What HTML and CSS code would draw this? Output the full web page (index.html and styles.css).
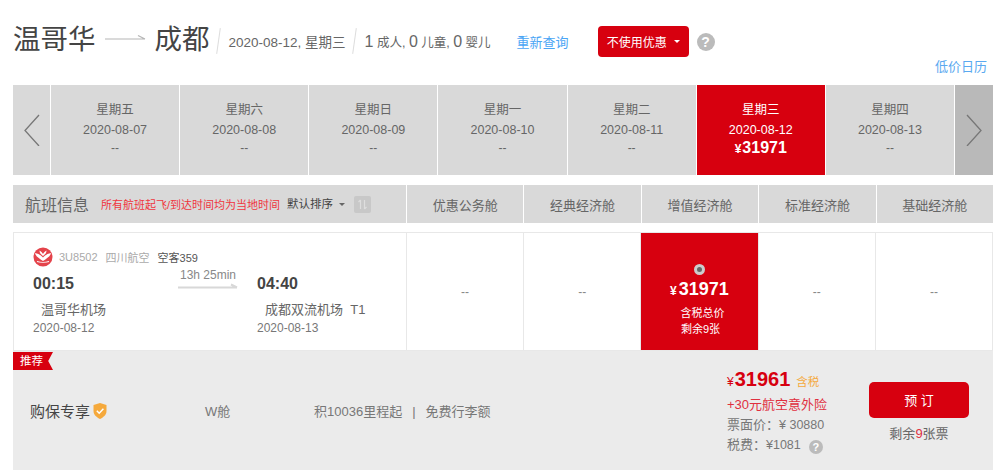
FILE: index.html
```html
<!DOCTYPE html>
<html>
<head>
    <title>航班查询</title>
    <link rel="stylesheet" href="styles.css">
</head>
<body>
    <div id="page">
        <div class="search-bar">
            <span class="city">温哥华</span>
            <svg class="route-arrow" width="41" height="8" viewBox="0 0 41 8">
                <path d="M0 5H40M33 1.5L40 5" fill="none" stroke="#b5b5b5" stroke-width="1.2"/>
            </svg>
            <span class="city">成都</span>
            <span class="slash"></span>
            <span class="search-date">2020-08-12, 星期三</span>
            <span class="slash"></span>
            <span class="people"><b>1</b> 成人, <b>0</b> 儿童, <b>0</b> 婴儿</span>
            <a class="requery">重新查询</a>
            <button class="discount-btn">不使用优惠<i class="caret"></i></button>
            <span class="help help-big">?</span>
        </div>
        <div class="calendar-link"><a>低价日历</a></div>

        <div class="date-strip">
            <div class="strip-arrow">
                <svg width="16" height="32" viewBox="0 0 16 32"><path d="M15 1L1 16.5L15 32" fill="none" stroke="#777" stroke-width="1.3"/></svg>
            </div>
            <div class="day"><span>星期五</span><span>2020-08-07</span><span class="day-price">--</span></div>
            <div class="day"><span>星期六</span><span>2020-08-08</span><span class="day-price">--</span></div>
            <div class="day"><span>星期日</span><span>2020-08-09</span><span class="day-price">--</span></div>
            <div class="day"><span>星期一</span><span>2020-08-10</span><span class="day-price">--</span></div>
            <div class="day"><span>星期二</span><span>2020-08-11</span><span class="day-price">--</span></div>
            <div class="day day-active"><span>星期三</span><span>2020-08-12</span><span class="day-price"><small>¥</small>31971</span></div>
            <div class="day"><span>星期四</span><span>2020-08-13</span><span class="day-price">--</span></div>
            <div class="strip-arrow strip-next">
                <svg width="16" height="32" viewBox="0 0 16 32"><path d="M1 1L15 16.5L1 32" fill="none" stroke="#777" stroke-width="1.3"/></svg>
            </div>
        </div>

        <div class="table-head">
            <div class="head-info">
                <span class="head-title">航班信息</span>
                <span class="head-note">所有航班起飞/到达时间均为当地时间</span>
                <span class="head-sort">默认排序<i class="caret caret-dark"></i></span>
                <span class="sort-btn">
                    <svg width="9" height="11" viewBox="0 0 9 11"><path d="M2.5 10V1M.5 3L2.5 1M6.5 1V10M8.5 8L6.5 10" fill="none" stroke="#dedede" stroke-width="1.2"/></svg>
                </span>
            </div>
            <div class="head-cabin">优惠公务舱</div>
            <div class="head-cabin">经典经济舱</div>
            <div class="head-cabin">增值经济舱</div>
            <div class="head-cabin">标准经济舱</div>
            <div class="head-cabin">基础经济舱</div>
        </div>

        <div class="flight-row">
            <div class="flight-info">
                <div class="flight-top">
                    <svg class="airline-logo" width="20" height="20" viewBox="0 0 20 20">
                        <circle cx="10" cy="10" r="9.5" fill="#e4434b"/>
                        <path d="M2 6C5 6.5 8 8 10 10.5C12 8 15 6.5 18 6C17 10 13.5 11.5 10 14C6.5 11.5 3 10 2 6Z" fill="#fff"/>
                        <path d="M6.5 3.5C8 4.5 9.2 5.5 10 7C10.8 5.5 12 4.5 13.5 3.5C13.5 6 12 7.5 10 9C8 7.5 6.5 6 6.5 3.5Z" fill="#fff"/>
                        <path d="M4 14.5C7 15.5 13 15.5 16 14.5" fill="none" stroke="#fff" stroke-width="1.2"/>
                    </svg>
                    <span class="flight-no">3U8502</span>
                    <span class="flight-no">四川航空</span>
                    <span class="plane">空客359</span>
                </div>
                <div class="flight-main">
                    <div class="stop">
                        <div class="stop-time">00:15</div>
                        <div class="stop-airport">温哥华机场</div>
                        <div class="stop-date">2020-08-12</div>
                    </div>
                    <div class="duration">
                        <span>13h 25min</span>
                        <svg width="60" height="6" viewBox="0 0 60 6"><path d="M0 4.5H59M53 1.5L59 4.5" fill="none" stroke="#d8d8d8" stroke-width="2"/></svg>
                    </div>
                    <div class="stop">
                        <div class="stop-time">04:40</div>
                        <div class="stop-airport">成都双流机场&nbsp; T1</div>
                        <div class="stop-date">2020-08-13</div>
                    </div>
                </div>
            </div>
            <div class="fare">--</div>
            <div class="fare">--</div>
            <div class="fare fare-active">
                <span class="radio"></span>
                <span class="fare-price"><small>¥</small>31971</span>
                <span class="fare-note">含税总价</span>
                <span class="fare-note fare-left">剩余9张</span>
            </div>
            <div class="fare">--</div>
            <div class="fare">--</div>
        </div>

        <div class="recommend">
            <span class="tag">推荐</span>
            <div class="rec-name">
                购保专享
                <svg width="14" height="16" viewBox="0 0 14 16">
                    <path d="M7 0L13.5 2V8C13.5 12 10 14.5 7 16C4 14.5 .5 12 .5 8V2Z" fill="#f5a93c"/>
                    <path d="M3.8 7.8L6.2 10.2L10.4 5.8" fill="none" stroke="#fff" stroke-width="1.5"/>
                </svg>
            </div>
            <div class="rec-cabin">W舱</div>
            <div class="rec-perks">积10036里程起<span class="perk-sep">|</span>免费行李额</div>
            <div class="rec-price">
                <div class="rec-total"><small>¥</small>31961<span>含税</span></div>
                <div class="rec-plus">+30元航空意外险</div>
                <div class="rec-line">票面价：<span class="rec-num">¥ 30880</span></div>
                <div class="rec-line">税费：<span class="rec-num">¥1081</span><span class="help help-small">?</span></div>
            </div>
            <div class="rec-book">
                <button class="book-btn">预 订</button>
                <div class="book-left">剩余<em>9</em>张票</div>
            </div>
        </div>
    </div>
</body>
</html>
```

FILE: styles.css
```css
body {
    margin: 0;
    background-color: white;
    color: #555;
    font-family: "Liberation Sans", "Noto Sans CJK SC", sans-serif;
    font-size: 12px;
    overflow: hidden;
}

#page {
    width: 980px;
    margin-left: 13px;
}

/* Search summary */
.search-bar {
    display: flex;
    align-items: center;
    height: 30px;
    padding-top: 26px;
}

.city {
    margin-top: -2px;
    font-size: 27.5px;
    line-height: 30px;
    color: #444;
}

.route-arrow {
    margin: -7px 9px 0 9px;
}

.slash {
    width: 1px;
    height: 26px;
    margin: 0 10px 0 8px;
    background-color: #ddd;
    transform: rotate(8deg);
}

.search-date {
    font-size: 13.5px;
    color: #666;
}

.people {
    font-size: 12.5px;
    color: #666;
}

.people b {
    font-size: 16px;
    font-weight: normal;
}

.requery {
    margin-left: 26px;
    font-size: 13px;
    color: #4aa5f5;
}

.discount-btn {
    display: flex;
    align-items: center;
    height: 31px;
    margin-left: 29px;
    padding: 0 9px;
    border: none;
    border-radius: 4px;
    background-color: #d7000f;
    color: white;
    font-family: inherit;
    font-size: 12px;
}

.caret {
    width: 0;
    height: 0;
    margin-left: 7px;
    border-top: 3px solid white;
    border-left: 3.5px solid transparent;
    border-right: 3.5px solid transparent;
}

.caret-dark {
    display: inline-block;
    margin-left: 6px;
    vertical-align: 2px;
    border-top-color: #666;
}

.help {
    display: inline-block;
    border-radius: 50%;
    background-color: #bbb;
    color: white;
    font-weight: bold;
    text-align: center;
}

.help-big {
    width: 18px;
    height: 18px;
    margin: 2px 0 0 8px;
    font-size: 14px;
    line-height: 18px;
}

.help-small {
    width: 14px;
    height: 14px;
    margin-left: 8px;
    font-size: 11px;
    line-height: 14px;
    vertical-align: -2px;
}

.calendar-link {
    height: 29px;
    padding: 3px 6px 0 0;
    box-sizing: border-box;
    font-size: 13px;
    text-align: right;
    line-height: 16px;
    color: #5aa9f0;
}

/* Date strip */
.date-strip {
    display: flex;
    gap: 1px;
    height: 90px;
}

.strip-arrow {
    display: flex;
    align-items: center;
    justify-content: center;
    width: 37px;
    background-color: #d9d9d9;
}

.strip-next {
    width: 38px;
    background-color: #b9b9b9;
}

.day {
    display: flex;
    flex: 1;
    flex-direction: column;
    align-items: center;
    padding-top: 15px;
    box-sizing: border-box;
    background-color: #d9d9d9;
    color: #666;
    font-size: 12.5px;
    line-height: 20px;
}

.day-active {
    background-color: #d7000f;
    color: white;
}

.day-price {
    margin-top: -2px;
    font-size: 12px;
}

.day-active .day-price {
    font-size: 16px;
    font-weight: bold;
}

.day-active small {
    font-size: 12px;
    margin-right: 1px;
}

/* Table */
.table-head,
.flight-row {
    display: grid;
    grid-template-columns: 392px repeat(5, 1fr);
    gap: 1px;
}

.table-head {
    grid-template-columns: 393px repeat(5, 1fr);
    height: 38px;
    margin-top: 10px;
}

.head-info {
    display: flex;
    align-items: center;
    padding-left: 12px;
    background-color: #d9d9d9;
}

.head-title {
    font-size: 16px;
    color: #666;
}

.head-note {
    margin-left: 12px;
    font-size: 11px;
    color: #f0353d;
}

.head-sort {
    margin: -2px 0 0 7px;
    font-size: 11.5px;
    color: #444;
}

.sort-btn {
    display: flex;
    align-items: center;
    justify-content: center;
    width: 17px;
    height: 17px;
    margin-left: 9px;
    border-radius: 2px;
    background-color: #c8c8c8;
}

.head-cabin {
    display: flex;
    align-items: center;
    justify-content: center;
    background-color: #d9d9d9;
    color: #666;
    font-size: 13px;
}

.flight-row {
    height: 119px;
    margin-top: 9px;
    background-color: #e8e8e8;
    padding: 1px;
    box-sizing: border-box;
}

.flight-info {
    padding: 14px 0 0 19px;
    background-color: white;
}

.flight-top {
    display: flex;
    align-items: center;
    height: 20px;
    color: #aaa;
    font-size: 11px;
}

.airline-logo {
    margin-right: 6px;
}

.flight-no {
    margin-right: 8px;
}

.plane {
    color: #555;
}

.flight-main {
    display: grid;
    grid-template-columns: 145px 79px 1fr;
}

.stop-time {
    height: 34px;
    font-size: 16px;
    font-weight: bold;
    line-height: 34px;
    color: #444;
}

.stop-airport {
    padding-left: 8px;
    font-size: 13px;
    line-height: 18px;
    color: #666;
}

.stop-date {
    font-size: 12px;
    line-height: 18px;
    color: #777;
}

.duration {
    display: flex;
    flex-direction: column;
    padding-top: 1px;
    font-size: 12px;
    line-height: 15px;
    color: #888;
}

.duration span {
    padding-left: 2px;
}

.fare {
    display: flex;
    align-items: center;
    justify-content: center;
    background-color: white;
    color: #888;
}

.fare-active {
    flex-direction: column;
    padding-top: 18px;
    box-sizing: border-box;
    background-color: #d7000f;
    color: white;
    font-size: 11px;
}

.radio {
    width: 5px;
    height: 5px;
    border: 3px solid #ccc;
    border-radius: 50%;
    background-color: #666;
}

.fare-price {
    font-size: 18px;
    font-weight: bold;
    line-height: 28px;
}

.fare-price small {
    font-size: 12px;
    margin-right: 2px;
}

.fare-note {
    margin-left: 6px;
    line-height: 16px;
}

.fare-left {
    margin-right: 4px;
}

/* Recommended product */
.recommend {
    position: relative;
    display: flex;
    align-items: center;
    height: 119px;
    padding-left: 17px;
    background-color: #ebebeb;
}

.tag {
    position: absolute;
    top: 1px;
    left: 0;
    width: 40px;
    height: 18px;
    padding: 0 3px 0 0;
    box-sizing: border-box;
    background-color: #d7000f;
    clip-path: polygon(0 0, 100% 0, 88% 50%, 100% 100%, 0 100%);
    color: white;
    font-size: 11.5px;
    line-height: 18px;
    text-align: center;
}

.rec-name {
    display: flex;
    align-items: center;
    gap: 3px;
    width: 175px;
    font-size: 15px;
    color: #444;
}

.rec-cabin {
    width: 109px;
    font-size: 13px;
    color: #777;
}

.rec-perks {
    width: 413px;
    font-size: 13px;
    color: #777;
}

.perk-sep {
    margin: 0 10px;
    color: #777;
}

.rec-price {
    width: 142px;
    font-size: 13px;
    color: #777;
    line-height: 20px;
}

.rec-total {
    font-size: 20px;
    font-weight: bold;
    line-height: 24px;
    color: #d7000f;
}

.rec-total small {
    font-size: 12px;
    font-weight: normal;
    margin-right: 1px;
}

.rec-total span {
    margin-left: 6px;
    font-size: 11.5px;
    font-weight: normal;
    color: #f5a93c;
}

.rec-plus {
    line-height: 21px;
    color: #e0303f;
}

.rec-num {
    font-size: 12.5px;
}

.rec-book {
    width: 100px;
    margin-top: 2px;
    text-align: center;
}

.book-btn {
    width: 100px;
    height: 36px;
    border: none;
    border-radius: 5px;
    background-color: #d7000f;
    color: white;
    font-family: inherit;
    font-size: 13px;
}

.book-left {
    margin-top: 5px;
    font-size: 13px;
    color: #666;
}

.book-left em {
    font-style: normal;
    color: #e0303f;
}
```
